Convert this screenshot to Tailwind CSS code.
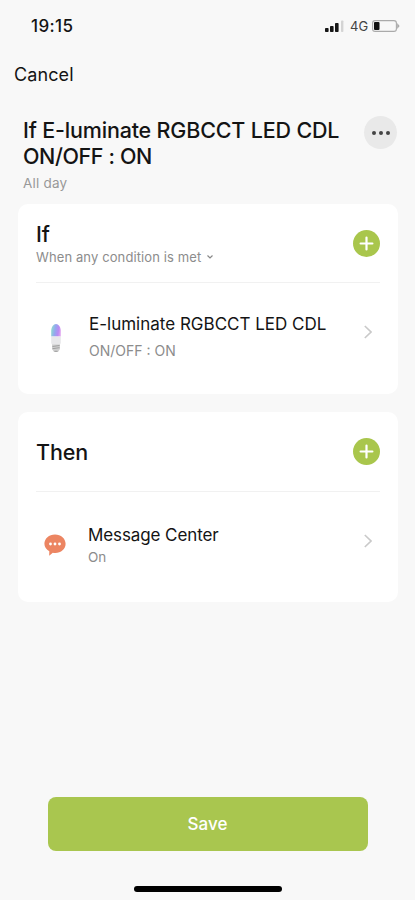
<!DOCTYPE html>
<html lang="en">
<head>
  <meta charset="UTF-8">
  <meta name="viewport" content="width=device-width, initial-scale=1.0">
  <title>Edit Scene</title>
  <script src="https://cdn.jsdelivr.net/npm/@tailwindcss/browser@4"></script>
</head>
<body class="bg-[#f8f8f8] font-['Inter',sans-serif] text-[#141414]">
  <div class="w-full h-screen flex flex-col overflow-hidden">

    <!-- Status bar -->
    <div class="h-[52px] shrink-0 pl-[31px] pr-[15px] flex items-center justify-between">
      <span class="text-[17px] leading-5 font-medium tracking-[0.4px]">19:15</span>
      <div class="flex items-center">
        <svg class="w-[19px] h-3" viewBox="0 0 19 12" fill="#161616">
          <rect x="0" y="8" width="3.6" height="4" rx="0.8" />
          <rect x="5" y="6" width="3.6" height="6" rx="0.8" />
          <rect x="10" y="3" width="3.6" height="9" rx="0.8" />
          <rect x="16" y="0.5" width="2.4" height="11.5" rx="0.8" fill="#d4d4d4" />
        </svg>
        <span class="ml-[6px] w-[18px] text-[13px] leading-4 text-[#444]">4G</span>
        <svg class="ml-[4px] w-7 h-3" viewBox="0 0 28 12" fill="none">
          <rect x="0.6" y="0.6" width="23.8" height="10.8" rx="2.5" stroke="#aaa" stroke-width="1.1" />
          <rect x="2" y="2" width="5.5" height="8" rx="1" fill="#111" />
          <path d="M25.2 3 27.6 6 25.2 9Z" fill="#aaa" />
        </svg>
      </div>
    </div>

    <div class="h-[46px] shrink-0 px-3.5 flex items-center">
      <button class="text-[18px] leading-6 tracking-[0.1px]">Cancel</button>
    </div>

    <!-- Scene name -->
    <div class="h-[106px] shrink-0 pt-[19px] pl-[23px] pr-[18px] flex items-start justify-between">
      <div>
        <h1 class="text-[21.5px] leading-[26px] font-medium tracking-[-0.18px] whitespace-nowrap">If E-luminate RGBCCT LED CDL<br><span class="tracking-[-0.4px]">ON/OFF : ON</span></h1>
        <p class="mt-[4px] text-[13.5px] leading-5 tracking-[0.2px] text-[#999]">All day</p>
      </div>
      <button class="mt-[-1px] size-[33px] rounded-full bg-[#e9e9e9] flex items-center justify-center gap-[3px]">
        <span class="size-1 rounded-full bg-[#444]"></span>
        <span class="size-1 rounded-full bg-[#444]"></span>
        <span class="size-1 rounded-full bg-[#444]"></span>
      </button>
    </div>

    <!-- Conditions -->
    <section class="ml-[18px] mr-[17px] h-[190px] shrink-0 px-[18px] rounded-[10px] bg-white flex flex-col">
      <div class="h-[79px] shrink-0 border-b border-[#f1f1f1] flex items-center justify-between">
        <div class="pt-px">
          <h2 class="text-[21.5px] leading-[26px] font-medium">If</h2>
          <p class="flex items-center text-[13px] leading-5 tracking-[0.11px] text-[#8c8c8c]">
            <span>When any condition is met</span>
            <svg class="ml-1.5 w-1.5 h-1.5" viewBox="0 0 6 6" fill="none" stroke="#888" stroke-width="1.2"><path d="M0.5 1.5 3 4 5.5 1.5" /></svg>
          </p>
        </div>
        <button class="size-[27px] rounded-full bg-[#a9c64c] flex items-center justify-center">
          <svg class="size-[15px]" viewBox="0 0 15 15" stroke="#fff" stroke-width="2.2" stroke-linecap="round"><path d="M7.5 1.6V13.4M1.6 7.5H13.4" /></svg>
        </button>
      </div>
      <div class="flex-1 pb-[2px] pl-[14px] pr-2 flex items-center">
        <svg class="w-3 h-[30px]" viewBox="0 0 12 30">
          <defs>
            <linearGradient id="bulb" x1="0" y1="0.4" x2="1" y2="0.6">
              <stop offset="0" stop-color="#8fdcd0" />
              <stop offset="0.4" stop-color="#94a8ee" />
              <stop offset="0.75" stop-color="#b98af2" />
              <stop offset="1" stop-color="#e0a6f0" />
            </linearGradient>
          </defs>
          <path d="M1.2 13.5V8C1.2 4 3.5 1 6 1S10.8 4 10.8 8V13.5Z" fill="url(#bulb)" />
          <path d="M1.2 13.5H10.8V20L9.8 22H2.2L1.2 20Z" fill="#e8e8ea" />
          <path d="M2 21.5H10V26L8 29H4L2 26Z" fill="#d0d0d0" />
          <path d="M2.5 23.5 9.5 22.5M2.5 25.7 9.5 24.7M4.5 28.3H7.5" stroke="#929292" stroke-width="0.8" />
        </svg>
        <div class="ml-[27px] pb-[2px] flex-1">
          <h3 class="text-[17px] leading-6 whitespace-nowrap">E-luminate RGBCCT LED CDL</h3>
          <p class="mt-[5px] text-[14px] leading-5 text-[#8c8c8c]">ON/OFF : ON</p>
        </div>
        <svg class="mb-3 w-2 h-3.5" viewBox="0 0 8 14" fill="none" stroke="#c9c9c9" stroke-width="1.6"><path d="M0.8 1 7 7 0.8 13" /></svg>
      </div>
    </section>

    <!-- Actions -->
    <section class="mt-[18px] ml-[18px] mr-[17px] h-[190px] shrink-0 px-[18px] rounded-[10px] bg-white flex flex-col">
      <div class="h-[80px] shrink-0 border-b border-[#f1f1f1] flex items-center justify-between">
        <h2 class="text-[21.5px] leading-[26px] font-medium tracking-[-0.1px]">Then</h2>
        <button class="size-[27px] rounded-full bg-[#a9c64c] flex items-center justify-center">
          <svg class="size-[15px]" viewBox="0 0 15 15" stroke="#fff" stroke-width="2.2" stroke-linecap="round"><path d="M7.5 1.6V13.4M1.6 7.5H13.4" /></svg>
        </button>
      </div>
      <div class="flex-1 pb-[4px] pl-[8px] pr-2 flex items-center">
        <svg class="mb-px w-[22px] h-[22px]" viewBox="0 0 22 22">
          <path d="M11 0.5C17 0.5 21.6 4.6 21.6 9.8S17 19 11.3 19C10.4 19 9.6 18.9 8.8 18.8L5.2 21.8 5.3 17.3C2.3 15.7 0.4 13 0.4 9.8 0.4 4.6 5 0.5 11 0.5Z" fill="#ec8562" />
          <g fill="#fff"><circle cx="6.5" cy="10" r="1.4" /><circle cx="11" cy="10" r="1.4" /><circle cx="15.5" cy="10" r="1.4" /></g>
        </svg>
        <div class="ml-[22px] flex-1">
          <h3 class="text-[17px] leading-6 tracking-[-0.1px] whitespace-nowrap">Message Center</h3>
          <p class="text-[13.5px] leading-5 text-[#8c8c8c]">On</p>
        </div>
        <svg class="mb-[9px] w-2 h-3.5" viewBox="0 0 8 14" fill="none" stroke="#c9c9c9" stroke-width="1.6"><path d="M0.8 1 7 7 0.8 13" /></svg>
      </div>
    </section>

    <!-- Footer -->
    <div class="mt-auto shrink-0 pb-2 flex flex-col items-center">
      <button class="w-[320px] h-[54px] rounded-lg bg-[#a9c64f] text-white text-[17px] leading-6 font-medium">Save</button>
      <div class="mt-[35px] w-[148px] h-[6px] rounded-full bg-black"></div>
    </div>

  </div>
</body>
</html>
